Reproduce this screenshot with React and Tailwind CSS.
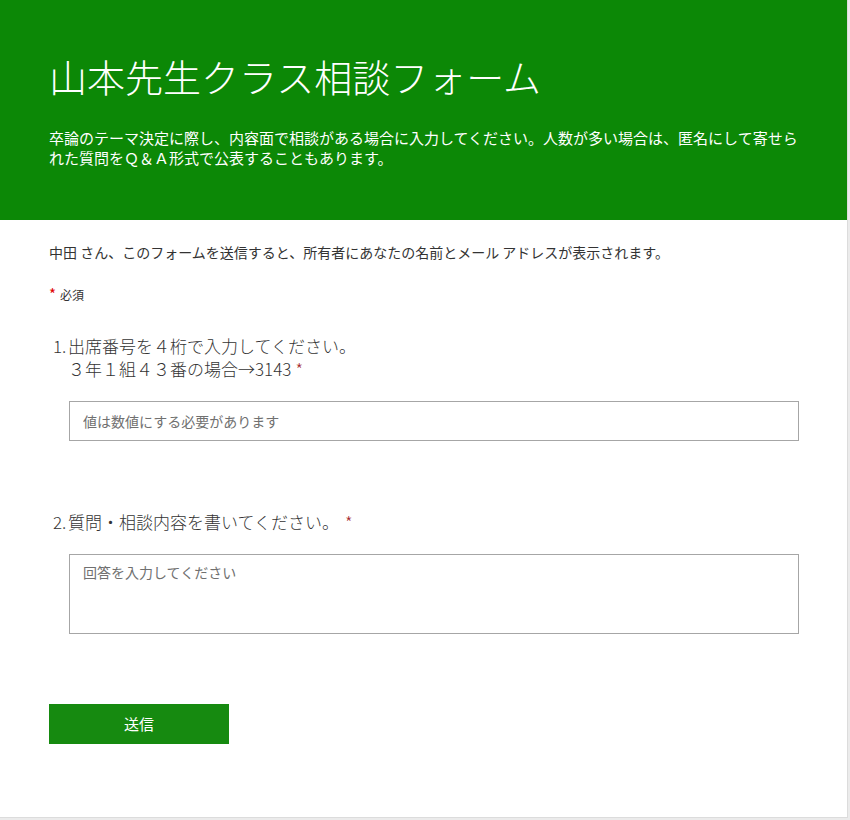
import React from "react";

export default function App() {
  const font = { fontFamily: '"Noto Sans CJK JP", "Noto Sans", sans-serif' };

  return (
    <div className="min-h-screen bg-[#ebebeb]" style={font}>
      <div className="w-[848px] h-[818px] bg-white border-r border-b border-[#dcdcdc]">
        <div className="h-[220px] bg-[#0c8806] pl-[49px] pt-[50px]">
          <h1 className="text-[38px] leading-[52px] text-white font-light">
            山本先生クラス相談フォーム
          </h1>
          <p className="mt-[26px] w-[756px] text-[15px] leading-[20px] text-white">
            卒論のテーマ決定に際し、内容面で相談がある場合に入力してください。人数が多い場合は、匿名にして寄せられた質問をＱ＆Ａ形式で公表することもあります。
          </p>
        </div>

        <div className="pl-[49px] pt-[22px]">
          <p className="text-[14px] leading-[20px] text-[#333333]">
            中田 さん、このフォームを送信すると、所有者にあなたの名前とメール アドレスが表示されます。
          </p>
          <p className="mt-[23px] text-[12px] leading-[18px] text-[#333333]">
            <span className="text-[#e00000] text-[15px] mr-1">*</span>必須
          </p>

          <div className="mt-[30px] ml-[4px] flex flex-col gap-[0px] text-[17px] leading-[23px] text-[#333333] font-light">
            <div className="flex">
              <span className="w-[15px]">1.</span>
              <span>出席番号を４桁で入力してください。</span>
            </div>
            <div className="pl-[15px]">
              ３年１組４３番の場合→3143
              <span className="text-[#a4262c] ml-1">*</span>
            </div>
          </div>
          <input
            type="text"
            placeholder="値は数値にする必要があります"
            className="mt-[21px] ml-[20px] block w-[730px] h-[40px] border border-[#a6a6a6] px-[13px] text-[14px] placeholder:text-[#707070] outline-none"
          />

          <div className="mt-[70px] ml-[4px] flex text-[17px] leading-[22px] text-[#333333] font-light">
            <span className="w-[15px]">2.</span>
            <div>
              質問・相談内容を書いてください。
              <span className="text-[#a4262c] ml-[6px]">*</span>
            </div>
          </div>
          <textarea
            placeholder="回答を入力してください"
            className="mt-[21px] ml-[20px] block w-[730px] h-[80px] border border-[#a6a6a6] px-[13px] py-[7px] text-[14px] leading-[20px] placeholder:text-[#707070] outline-none resize-none"
          />

          <button className="mt-[70px] w-[180px] h-[40px] bg-[#168a10] text-white text-[15px]">
            送信
          </button>
        </div>
      </div>
    </div>
  );
}
